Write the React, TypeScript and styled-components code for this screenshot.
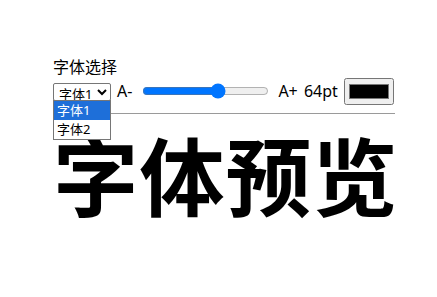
import React, { useState } from 'react';
import styled, { createGlobalStyle } from 'styled-components';

const GlobalStyle = createGlobalStyle`
  html, body {
    margin: 0;
    padding: 0;
    background: #fff;
    color: #000;
    font-family: "Noto Sans", "Noto Sans CJK SC", sans-serif;
  }
`;

const Page = styled.div`
  padding: 57px 0 0 53px;
  width: 342px;
`;

const Label = styled.div`
  font-size: 16px;
  line-height: 21px;
`;

const Toolbar = styled.div`
  display: flex;
  align-items: center;
  height: 26px;
  font-size: 16px;
`;

const SelectWrap = styled.div`
  position: relative;
  margin-top: 4px;
`;

const Select = styled.select`
  font-family: "Noto Sans", "Noto Sans CJK SC", sans-serif;
  font-size: 13px;
  height: 18px;
  width: 58px;
  padding: 0 0 0 1px;
  border: 1px solid #767676;
  border-radius: 2px;
  background: #fff;
  color: #000;
`;

const ListBox = styled.ul`
  position: absolute;
  left: 0;
  top: 18px;
  width: 56px;
  margin: 0;
  padding: 0;
  list-style: none;
  border: 1px solid #767676;
  background: #fff;
  z-index: 2;
`;

const Option = styled.li<{ $active?: boolean }>`
  font-size: 13px;
  line-height: 19px;
  height: 19px;
  padding-left: 3px;
  background: ${p => (p.$active ? '#1e6fd9' : '#fff')};
  color: ${p => (p.$active ? '#fff' : '#000')};
`;

const SizeText = styled.span<{ $gap?: number }>`
  margin-left: ${p => p.$gap ?? 0}px;
  line-height: 20px;
  word-spacing: 2px;
`;

const Slider = styled.input`
  width: 127px;
  margin: 0 0 0 10px;
  accent-color: #0075ff;
`;

const ColorInput = styled.input`
  width: 50px;
  height: 27px;
  margin-left: 6px;
`;

const Divider = styled.div`
  height: 1px;
  background: #9a9a9a;
  margin-top: 9px;
`;

const Preview = styled.div<{ $size: number; $family: string }>`
  font-size: ${p => p.$size}pt;
  font-family: ${p => p.$family};
  font-weight: 700;
  line-height: 1.2;
  margin-top: 8px;
  letter-spacing: 1px;
  white-space: nowrap;
`;

const fonts = ['"Noto Sans CJK SC", sans-serif', '"Noto Sans CJK JP", sans-serif'];

const App: React.FC = () => {
  const [font, setFont] = useState(0);
  const [size, setSize] = useState(64);
  const [color, setColor] = useState('#000000');

  return (
    <>
      <GlobalStyle />
      <Page>
        <Label>字体选择</Label>
        <Toolbar>
          <SelectWrap>
            <Select value={font} onChange={e => setFont(Number(e.target.value))}>
              <option value={0}>字体1</option>
              <option value={1}>字体2</option>
            </Select>
            <ListBox>
              <Option $active={font === 0} onClick={() => setFont(0)}>字体1</Option>
              <Option $active={font === 1} onClick={() => setFont(1)}>字体2</Option>
            </ListBox>
          </SelectWrap>
          <SizeText $gap={6}>A-</SizeText>
          <Slider
            type="range"
            min={8}
            max={100}
            value={size}
            onChange={e => setSize(Number(e.target.value))}
          />
          <SizeText $gap={9}>A+ {size}pt</SizeText>
          <ColorInput type="color" value={color} onChange={e => setColor(e.target.value)} />
        </Toolbar>
        <Divider />
        <Preview $size={size} $family={fonts[font]} style={{ color }}>
          字体预览
        </Preview>
      </Page>
    </>
  );
};

export default App;
